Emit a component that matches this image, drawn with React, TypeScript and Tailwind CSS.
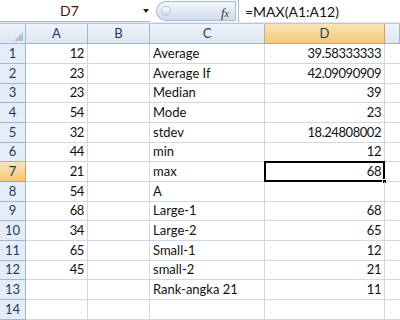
import React from "react";

const rows: [string, string, string][] = [
  ["12", "Average", "39.58333333"],
  ["23", "Average If", "42.09090909"],
  ["23", "Median", "39"],
  ["54", "Mode", "23"],
  ["32", "stdev", "18.24808002"],
  ["44", "min", "12"],
  ["21", "max", "68"],
  ["54", "A", ""],
  ["68", "Large-1", "68"],
  ["34", "Large-2", "65"],
  ["65", "Small-1", "12"],
  ["45", "small-2", "21"],
  ["", "Rank-angka 21", "11"],
  ["", "", ""],
];

// rows are ~19.7px in the shot, so mix 20 and 19
const tall = [true, true, false, true, true, false, true, true, false, true, true, false, true, true];

const font = { fontFamily: "Lato, 'Open Sans', sans-serif" };

function ColHeader({ label, active }: { label: string; active?: boolean }) {
  return (
    <div
      className={
        active
          ? "h-5 flex items-center justify-center text-[13px] text-[#1e395b] bg-gradient-to-b from-[#fbe4b6] to-[#f6c876] border-r border-b border-[#f29536]"
          : "h-5 flex items-center justify-center text-[13px] text-[#1e395b] bg-gradient-to-b from-[#eef3fa] to-[#dde6f1] border-r border-b border-[#9eb6ce]"
      }
    >
      {label}
    </div>
  );
}

export default function App() {
  return (
    <div className="w-[400px] h-[320px] overflow-hidden bg-white text-[#111]" style={font}>
      {/* formula bar */}
      <div className="h-6 flex bg-[#dfe8f5] border-b border-[#b9c9da]">
        <div className="w-[150px] h-[22px] bg-white border-b border-[#a9b8cc] flex items-center relative">
          <span className="ml-[60px] text-[14px] text-[#5b0b0b]">D7</span>
          <span className="absolute right-[1px] top-[9px] w-0 h-0 border-l-[3px] border-r-[3px] border-t-[4px] border-l-transparent border-r-transparent border-t-[#222]" />
        </div>
        <div className="w-[6px] h-[22px] bg-white" />
        <div className="w-[82px] h-[22px] bg-white flex items-center">
          <div className="w-[80px] h-[20px] rounded-l-full rounded-r-[4px] bg-gradient-to-b from-[#f3f6fb] to-[#cfdcec] border border-[#a7bad2] flex items-center relative">
            <span className="ml-[4px] w-[10px] h-[10px] rounded-full bg-gradient-to-b from-[#ffffff] to-[#c9d6e6] border border-[#b8c8dc]" />
            <span className="absolute right-[6px] top-[1px] text-[13px] italic text-[#333]" style={{ fontFamily: "'Liberation Serif', serif" }}>
              f<span className="text-[10px]">x</span>
            </span>
          </div>
        </div>
        <div className="flex-1 h-[22px] bg-white border-l border-[#a9b8cc] flex items-center">
          <span className="ml-[6px] text-[14px] text-[#111]">=MAX(A1:A12)</span>
        </div>
      </div>

      {/* grid */}
      <div className="grid grid-cols-[26px_62px_62px_115px_120px_15px]">
        <div className="h-5 bg-gradient-to-b from-[#eef3fa] to-[#dde6f1] border-r border-b border-[#9eb6ce] relative">
          <span className="absolute right-[2px] bottom-[2px] w-0 h-0" style={{ borderBottom: "9px solid #b4c4d8", borderLeft: "9px solid transparent" }} />
        </div>
        <ColHeader label="A" />
        <ColHeader label="B" />
        <ColHeader label="C" />
        <ColHeader label="D" active />
        <ColHeader label="" />

        {rows.map(([a, c, d], i) => {
          const n = i + 1;
          const sel = n === 7;
          const h = tall[i] ? "h-5" : "h-[19px]";
          return (
            <React.Fragment key={n}>
              <div
                className={
                  sel
                    ? `${h} flex items-center justify-center text-[13px] text-[#1e395b] bg-gradient-to-b from-[#fbe4b6] to-[#f6c876] border-r border-b border-[#f29536]`
                    : `${h} flex items-center justify-center text-[13px] text-[#1e395b] bg-[#e4ecf7] border-r border-b border-[#9eb6ce]`
                }
              >
                {n}
              </div>
              <div className={`${h} flex items-center justify-end pr-[3px] text-[13px] tracking-[-0.4px] border-r border-b border-[#d0d7e5]`}>{a}</div>
              <div className={`${h} border-r border-b border-[#d0d7e5]`} />
              <div className={`${h} flex items-center pl-[3px] text-[13px] border-r border-b border-[#d0d7e5] whitespace-nowrap`}>{c}</div>
              <div className={`${h} relative flex items-center justify-end pr-[3px] text-[13px] tracking-[-0.45px] border-r border-b border-[#d0d7e5]`}>
                {d}
                {sel && (
                  <>
                    <span className="absolute left-[-1px] top-[-1px] right-[-1px] bottom-[-1px] border-2 border-black" />
                    <span className="absolute right-[-3px] bottom-[-3px] w-[5px] h-[5px] bg-black border border-white" />
                  </>
                )}
              </div>
              <div className={`${h} border-b border-[#d0d7e5]`} />
            </React.Fragment>
          );
        })}
      </div>
    </div>
  );
}
